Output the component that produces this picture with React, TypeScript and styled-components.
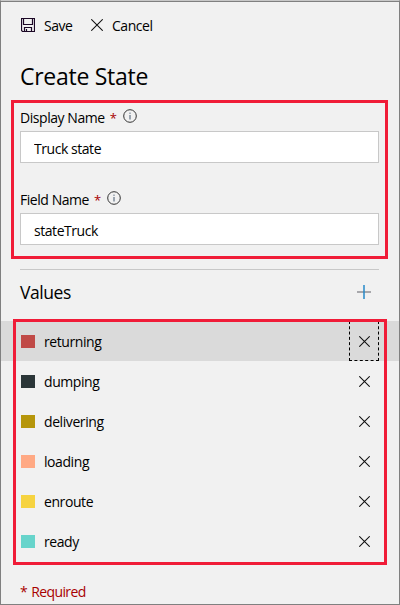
import React from "react";
import styled, { createGlobalStyle } from "styled-components";

const GlobalStyle = createGlobalStyle`
  *, *::before, *::after { box-sizing: border-box; }
  body { margin: 0; background: #f1f1f1; }
  button, input { font: inherit; color: inherit; letter-spacing: inherit; }
`;

const Panel = styled.main`
  position: relative;
  display: flex;
  flex-direction: column;
  width: 400px;
  height: 605px;
  overflow: hidden;
  background: #f1f1f1;
  border: 1px solid #808080;
  border-top-color: #c8c8c8;
  box-shadow: inset 0 1px 0 #808080;
  color: #000;
  font-family: "Open Sans", "Noto Sans", sans-serif;
  font-size: 14px;
  letter-spacing: -0.45px;
  line-height: 20px;
`;

const Toolbar = styled.div`
  display: flex;
  height: 50px;
  padding: 15px 0 0 20px;
`;

const ToolButton = styled.button<{ $width: number; $gap: number; $iconTop: number }>`
  display: flex;
  align-items: flex-start;
  gap: ${(p) => p.$gap}px;
  width: ${(p) => p.$width}px;
  height: 20px;
  padding: 0;
  border: 0;
  background: none;
  svg { flex: none; margin-top: ${(p) => p.$iconTop}px; }
`;

const Title = styled.h1`
  height: 49px;
  margin: 0;
  padding: 9px 0 0 19px;
  font-size: 23px;
  font-weight: 400;
  line-height: 32px;
  letter-spacing: -0.28px;
`;

const Highlight = styled.div<{ $x: number; $y: number; $w: number; $h: number }>`
  position: absolute;
  left: ${(p) => p.$x}px;
  top: ${(p) => p.$y}px;
  width: ${(p) => p.$w}px;
  height: ${(p) => p.$h}px;
  border: 3px solid #f01c38;
  pointer-events: none;
`;

const Field = styled.div`
  height: 82px;
  padding: 8px 20px 0 19px;
`;

const Label = styled.label`
  display: flex;
  height: 23px;
`;

const Star = styled.span`
  width: 6px;
  margin-left: 5px;
  color: #a80000;
  font-size: 13px;
`;

const InfoIcon = styled.svg`
  margin: 1px 0 0 7px;
`;

const Input = styled.input`
  display: block;
  width: 359px;
  height: 32px;
  padding: 2px 13px 0;
  border: 1px solid #c8c8c8;
  border-radius: 0;
  outline: 0;
  background: #fff;
`;

const ValuesHeader = styled.div`
  display: flex;
  justify-content: space-between;
  height: 52px;
  margin: 5px 20px 0 19px;
  padding-top: 10px;
  border-top: 1px solid #c8c8c8;
  svg { margin: 5px 8px 0 0; }
`;

const Heading = styled.h2`
  margin: 0;
  font-size: 17.5px;
  font-weight: 400;
  line-height: 24px;
  letter-spacing: -0.45px;
`;

const List = styled.ul`
  margin: 0;
  padding: 0;
  list-style: none;
`;

const Row = styled.li<{ $selected: boolean }>`
  display: flex;
  align-items: center;
  height: 40px;
  padding: 0 20px;
  background: ${(p) => (p.$selected ? "#dadada" : "transparent")};
`;

const Swatch = styled.span<{ $color: string }>`
  width: 14px;
  height: 13px;
  margin: 1px 9px 0 0;
  background: ${(p) => p.$color};
`;

const Name = styled.span`
  flex: 1;
  padding-top: 2px;
  letter-spacing: -0.42px;
`;

const RemoveButton = styled.button<{ $focused: boolean }>`
  display: grid;
  place-items: center;
  width: 30px;
  height: 40px;
  padding: 1px 0 0 1px;
  border: 1px dashed ${(p) => (p.$focused ? "#000" : "transparent")};
  background: none;
`;

const Required = styled.p`
  display: flex;
  gap: 4px;
  margin: 0;
  padding: 21px 0 0 19px;
  color: #a80000;
  letter-spacing: -0.6px;
`;

const SaveIcon = () => (
  <svg width="14" height="14" viewBox="0 0 14 14" fill="none" stroke="#1c0826">
    <path d="M.5 .5h13v13H1.5L.5 12.5z" strokeWidth="1.2" />
    <path d="M2.5 .5v6h9v-6M3.5 13.5v-4h7v4M5.5 13v-2" strokeWidth="1.2" />
  </svg>
);

const Cross = ({ size, color = "#111" }: { size: number; color?: string }) => (
  <svg width={size} height={size} viewBox={`0 0 ${size} ${size}`} stroke={color} strokeWidth="1.05">
    <path d={`M.3 .3L${size - 0.3} ${size - 0.3}M${size - 0.3} .3L.3 ${size - 0.3}`} />
  </svg>
);

const Info = () => (
  <InfoIcon width="14" height="14" viewBox="0 0 14 14" fill="none" stroke="#333">
    <circle cx="7" cy="7" r="6.3" />
    <path d="M7 6v4.5M7 3.6v1.2" stroke="#44586e" />
  </InfoIcon>
);

const fields = [
  { id: "display", label: "Display Name", value: "Truck state" },
  { id: "field", label: "Field Name", value: "stateTruck" },
];

const values = [
  { name: "returning", color: "#c04a47" },
  { name: "dumping", color: "#2b3638" },
  { name: "delivering", color: "#b6960b" },
  { name: "loading", color: "#ffa984" },
  { name: "enroute", color: "#f6d340" },
  { name: "ready", color: "#67d4cb" },
];

export default function App() {
  return (
    <>
      <GlobalStyle />
      <Panel>
        <Toolbar>
          <ToolButton $width={70} $gap={9} $iconTop={2}><SaveIcon />Save</ToolButton>
          <ToolButton $width={65} $gap={9} $iconTop={3}><Cross size={12} />Cancel</ToolButton>
        </Toolbar>
        <Title>Create State</Title>
        {fields.map((f) => (
          <Field key={f.id}>
            <Label htmlFor={f.id}>{f.label}<Star>*</Star><Info /></Label>
            <Input id={f.id} defaultValue={f.value} />
          </Field>
        ))}
        <ValuesHeader>
          <Heading>Values</Heading>
          <svg width="14" height="14" viewBox="0 0 14 14">
            <path d="M0 7h14" stroke="#a8a8ac" strokeWidth="2" />
            <path d="M7 0v14" stroke="#2588c8" strokeWidth="1.5" />
          </svg>
        </ValuesHeader>
        <List>
          {values.map((v, i) => (
            <Row key={v.name} $selected={i === 0}>
              <Swatch $color={v.color} />
              <Name>{v.name}</Name>
              <RemoveButton $focused={i === 0} aria-label={`Remove ${v.name}`}><Cross size={11} /></RemoveButton>
            </Row>
          ))}
        </List>
        <Required><span>*</span><span>Required</span></Required>
        <Highlight $x={10} $y={99} $w={377} $h={159} />
        <Highlight $x={12} $y={318} $w={374} $h={246} />
      </Panel>
    </>
  );
}
